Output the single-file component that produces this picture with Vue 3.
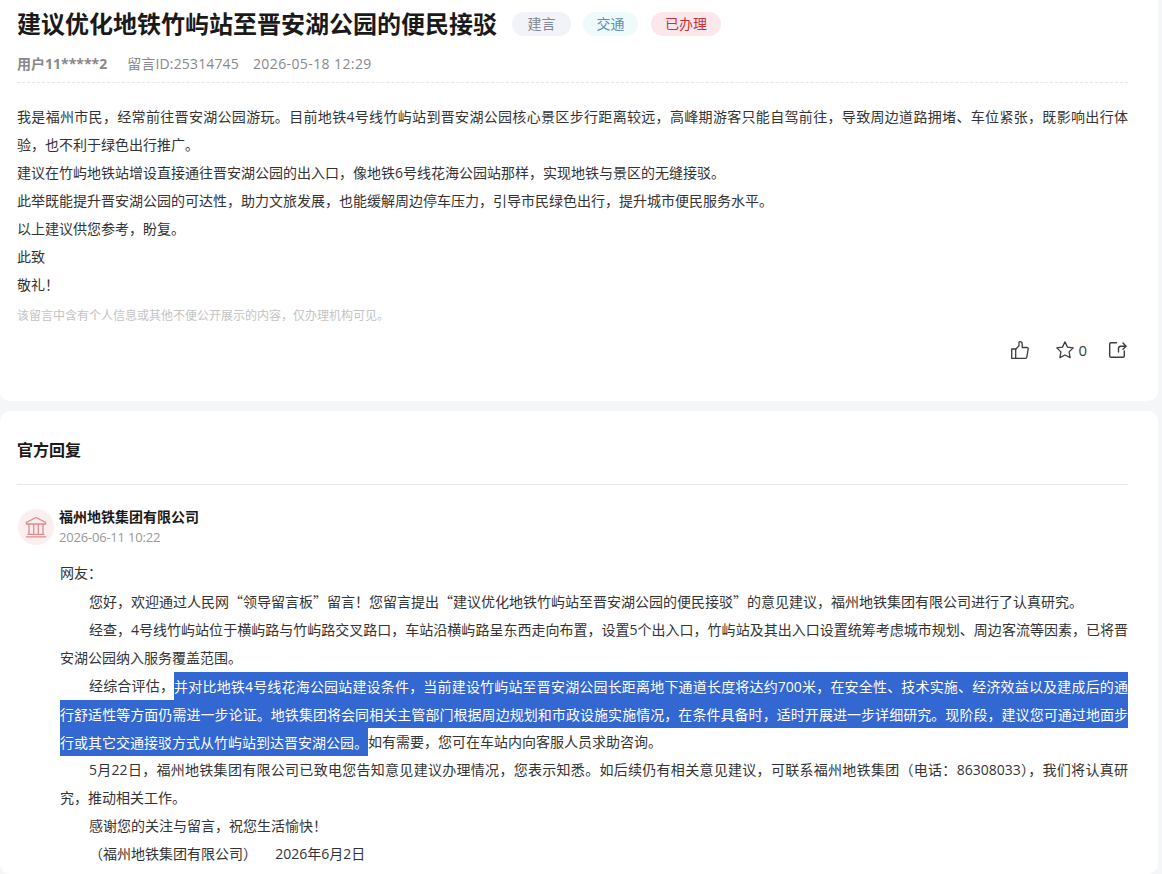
<script setup>
const tags = [
  { text: "建言", cls: "tag-gray" },
  { text: "交通", cls: "tag-teal" },
  { text: "已办理", cls: "tag-red" },
];

const paragraphs = [
  "我是福州市民，经常前往晋安湖公园游玩。目前地铁4号线竹屿站到晋安湖公园核心景区步行距离较远，高峰期游客只能自驾前往，导致周边道路拥堵、车位紧张，既影响出行体验，也不利于绿色出行推广。",
  "建议在竹屿地铁站增设直接通往晋安湖公园的出入口，像地铁6号线花海公园站那样，实现地铁与景区的无缝接驳。",
  "此举既能提升晋安湖公园的可达性，助力文旅发展，也能缓解周边停车压力，引导市民绿色出行，提升城市便民服务水平。",
  "以上建议供您参考，盼复。",
  "此致",
  "敬礼！",
];
</script>

<template>
  <div class="page">
    <section class="card detail">
      <div class="head">
        <h1 class="title">建议优化地铁竹屿站至晋安湖公园的便民接驳</h1>
        <span v-for="tag in tags" :key="tag.text" class="tag" :class="tag.cls">{{ tag.text }}</span>
      </div>
      <div class="meta">
        <span class="user">用户11*****2</span>
        <span class="msg-id">留言ID:25314745</span>
        <span class="msg-date">2026-05-18 12:29</span>
      </div>
      <div class="content">
        <p v-for="p in paragraphs" :key="p">{{ p }}</p>
      </div>
      <p class="notice">该留言中含有个人信息或其他不便公开展示的内容，仅办理机构可见。</p>
      <div class="actions">
        <svg class="icon" viewBox="0 0 18 18" fill="none" stroke="currentColor" stroke-width="1.3" stroke-linejoin="round">
          <path d="M.7 8h4v9.300h-4z" />
          <path d="M4.700 8.200 8 4.800V1.900c0-.7.4-1.200 1-1.200 1.300 0 2.200 1 2.200 2.300V6.500h4.800c.8 0 1.300.6 1.200 1.300l-1.400 8.300c-.1.800-.7 1.200-1.400 1.200H4.700" />
        </svg>
        <span class="star">
          <svg class="icon" viewBox="0 0 18 18" fill="none" stroke="currentColor" stroke-width="1.3" stroke-linejoin="round">
            <path d="M9 .9l2.500 5.200 5.700.8-4.100 4 1 5.700L9 14l-5.100 2.600 1-5.700-4.100-4 5.700-.8z" />
          </svg>
          <span>0</span>
        </span>
        <svg class="icon" viewBox="0 0 18 18" fill="none" stroke="currentColor" stroke-width="1.4" stroke-linejoin="round" stroke-linecap="round">
          <path d="M7.500 1.700H2c-.8 0-1.300.5-1.300 1.300v12c0 .8.5 1.300 1.300 1.300h12c.8 0 1.300-.5 1.300-1.300v-5" />
          <path d="M9.500 11V7.500c0-1.300.9-2.200 2.200-2.200h5" />
          <path d="M14 2l3 3.300-3 3" />
        </svg>
      </div>
    </section>

    <section class="card reply">
      <h2 class="reply-title">官方回复</h2>
      <div class="org">
        <div class="avatar">
          <svg viewBox="0 0 24 24" fill="none" stroke="#e08a8f" stroke-width="1.300">
            <path d="M12 2.500 2.500 7.500v1.500h19V7.500z" />
            <path d="M5 9v10M9.700 9v10M14.300 9v10M19 9v10" />
            <path d="M3.500 19.300h17M2 21.800h20" />
          </svg>
        </div>
        <div class="org-info">
          <div class="org-name">福州地铁集团有限公司</div>
          <div class="org-date">2026-06-11 10:22</div>
        </div>
      </div>
      <div class="reply-body">
        <p>网友：</p>
        <p class="indent">您好，欢迎通过人民网<span class="quote">“</span>领导留言板<span class="quote">”</span>留言！您留言提出<span class="quote">“</span>建议优化地铁竹屿站至晋安湖公园的便民接驳<span class="quote">”</span>的意见建议，福州地铁集团有限公司进行了认真研究。</p>
        <p class="indent">经查，4号线竹屿站位于横屿路与竹屿路交叉路口，车站沿横屿路呈东西走向布置，设置5个出入口，竹屿站及其出入口设置统筹考虑城市规划、周边客流等因素，已将晋安湖公园纳入服务覆盖范围。</p>
        <p class="indent">经综合评估，<span class="selected">并对比地铁4号线花海公园站建设条件，当前建设竹屿站至晋安湖公园长距离地下通道长度将达约700米，在安全性、技术实施、经济效益以及建成后的通行舒适性等方面仍需进一步论证。地铁集团将会同相关主管部门根据周边规划和市政设施实施情况，在条件具备时，适时开展进一步详细研究。现阶段，建议您可通过地面步行或其它交通接驳方式从竹屿站到达晋安湖公园。</span>如有需要，您可在车站内向客服人员求助咨询。</p>
        <p class="indent">5月22日，福州地铁集团有限公司已致电您告知意见建议办理情况，您表示知悉。如后续仍有相关意见建议，可联系福州地铁集团（电话：86308033），我们将认真研究，推动相关工作。</p>
        <p class="indent">感谢您的关注与留言，祝您生活愉快！</p>
        <p class="sign">（福州地铁集团有限公司）&nbsp;&nbsp;&nbsp;&nbsp;&nbsp;2026年6月2日</p>
      </div>
    </section>
  </div>
</template>

<style>
html,
body {
  margin: 0;
  background: #f5f6f8;
}
</style>

<style scoped>
.page {
  width: 1158px;
  height: 874px;
  overflow: hidden;
  font-family: "Open Sans", "Noto Sans CJK SC", sans-serif;
  font-size: 14px;
  color: #333;
}
p,
h1,
h2 {
  margin: 0;
}
.card {
  background: #fff;
  border-radius: 10px;
  padding: 0 30px 0 17px;
}
.detail {
  height: 401px;
  box-sizing: border-box;
  border-top-left-radius: 0;
  border-top-right-radius: 0;
}
.head {
  display: flex;
  align-items: center;
  padding-top: 8px;
  height: 32px;
}
.title {
  font-size: 24px;
  line-height: 32px;
  font-weight: 700;
  color: #1a1a1a;
  margin-right: 15px;
}
.tag {
  height: 24px;
  line-height: 24px;
  border-radius: 12px;
  font-size: 14px;
}
.tag-gray {
  padding: 0 15.5px;
  margin-right: 12px;
  background: #f1f3f8;
  color: #7f8694;
}
.tag-teal {
  padding: 0 13.5px;
  margin-right: 13px;
  background: #eefbfa;
  color: #5a8cc0;
}
.tag-red {
  padding: 0 14px;
  background: #fce8ea;
  color: #c8323f;
}
.meta {
  display: flex;
  gap: 14px;
  margin-top: 13px;
  height: 22px;
  line-height: 22px;
  color: #888;
  padding-bottom: 7px;
  border-bottom: 1px dashed #e6e6e6;
}
.user {
  font-weight: 700;
  margin-right: 6px;
}
.msg-id {
  letter-spacing: 0.15px;
}
.msg-date {
  letter-spacing: 0.4px;
}
.content {
  margin-top: 20px;
  width: 1111px;
  line-height: 28px;
  text-align: justify;
}
.notice {
  margin-top: 7px;
  font-size: 12px;
  line-height: 20px;
  color: #c4c4c4;
}
.actions {
  display: flex;
  justify-content: flex-end;
  align-items: center;
  margin-top: 14px;
  padding-right: 1px;
  color: #3c3c3c;
}
.icon {
  width: 18px;
  height: 18px;
  display: block;
}
.star {
  display: flex;
  align-items: center;
  gap: 4px;
  margin: 0 22px 0 27px;
  font-size: 15px;
  line-height: 20px;
}
.reply {
  margin-top: 10px;
  padding-top: 25px;
  height: 463px;
  box-sizing: border-box;
}
.reply-title {
  font-size: 16px;
  line-height: 28px;
  font-weight: 700;
  color: #1a1a1a;
  padding-bottom: 20px;
  border-bottom: 1px solid #e6e6e6;
}
.org {
  display: flex;
  align-items: flex-start;
  gap: 5px;
  margin: 24px 0 0 1px;
}
.avatar {
  width: 36px;
  height: 36px;
  border-radius: 50%;
  background: #fbeeee;
  display: flex;
  align-items: center;
  justify-content: center;
}
.avatar svg {
  width: 24px;
  height: 24px;
}
.org-info {
  margin-top: -2px;
}
.org-name {
  font-size: 14px;
  line-height: 20px;
  font-weight: 700;
  color: #1a1a1a;
}
.org-date {
  font-size: 13px;
  line-height: 20px;
  letter-spacing: -0.2px;
  color: #999;
}
.reply-body {
  margin: 12px 0 0 43px;
  width: 1068px;
  line-height: 28px;
  text-align: justify;
}
.indent {
  text-indent: 29px;
}
.quote {
  font-family: "Noto Sans CJK SC", sans-serif;
}
.sign {
  padding-left: 29px;
}
.selected {
  background: #3367d1;
  color: #fff;
  padding: 4.5px 0;
}
</style>
